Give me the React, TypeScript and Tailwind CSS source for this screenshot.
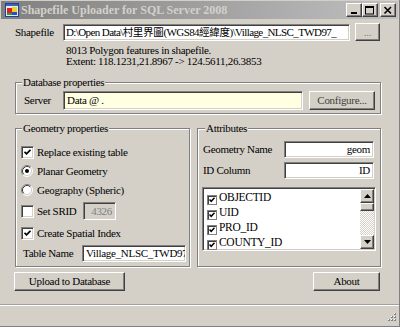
import React from "react";

const sunken =
  "border border-t-[#808080] border-l-[#808080] border-r-white border-b-white shadow-[inset_1px_1px_0_#404040,inset_-1px_-1px_0_#d4d0c8]";
const raised =
  "border border-t-white border-l-white border-r-[#404040] border-b-[#404040] shadow-[inset_-1px_-1px_0_#808080]";
const group =
  "relative border border-[#808080] shadow-[inset_1px_1px_0_#fff,1px_1px_0_#fff]";

function Check({ checked }: { checked?: boolean }) {
  return (
    <div className={`w-[13px] h-[13px] shrink-0 bg-white flex items-center justify-center ${sunken}`}>
      {checked && (
        <svg width="7" height="7" viewBox="0 0 7 7">
          <polyline points="0.5,2.8 2.5,4.8 6.5,0.8" fill="none" stroke="#000" strokeWidth="1.8" />
        </svg>
      )}
    </div>
  );
}

function Radio({ checked }: { checked?: boolean }) {
  return (
    <svg width="12" height="12" viewBox="0 0 12 12" className="shrink-0">
      <circle cx="6" cy="6" r="5" fill="#fff" />
      <path d="M2.11 9.89 A5.5 5.5 0 0 1 9.89 2.11" fill="none" stroke="#808080" strokeWidth="1" />
      <path d="M9.89 2.11 A5.5 5.5 0 0 1 2.11 9.89" fill="none" stroke="#fff" strokeWidth="1" />
      <path d="M2.82 9.18 A4.5 4.5 0 0 1 9.18 2.82" fill="none" stroke="#404040" strokeWidth="1" />
      <path d="M9.18 2.82 A4.5 4.5 0 0 1 2.82 9.18" fill="none" stroke="#d4d0c8" strokeWidth="1" />
      {checked && <circle cx="6" cy="6" r="2" fill="#000" />}
    </svg>
  );
}

function ListCheck() {
  return (
    <div className="w-[10px] h-[10px] shrink-0 bg-white border border-[#808080] shadow-[inset_1px_1px_0_#404040] flex items-center justify-center">
      <svg width="6" height="6" viewBox="0 0 6 6">
        <polyline points="0.5,2.5 2.2,4.3 5.5,0.8" fill="none" stroke="#000" strokeWidth="1.5" />
      </svg>
    </div>
  );
}

function Arrow({ up }: { up?: boolean }) {
  return (
    <div className={`w-[14px] h-[14px] bg-[#d4d0c8] flex items-center justify-center ${raised}`}>
      <svg width="7" height="4" viewBox="0 0 7 4">
        {up ? <polygon points="3.5,0 7,4 0,4" fill="#000" /> : <polygon points="0,0 7,0 3.5,4" fill="#000" />}
      </svg>
    </div>
  );
}

function CapBtn({ kind }: { kind: "min" | "max" | "close" }) {
  return (
    <div className={`w-[16px] h-[14px] bg-[#d4d0c8] flex items-center justify-center ${raised}`}>
      <svg width="10" height="9" viewBox="0 0 10 9">
        {kind === "min" && <rect x="2" y="6" width="6" height="2" fill="#000" />}
        {kind === "max" && (
          <>
            <rect x="0.5" y="0.5" width="8" height="7.5" fill="none" stroke="#000" strokeWidth="1" />
            <rect x="0.5" y="0.5" width="8" height="1.5" fill="#000" />
          </>
        )}
        {kind === "close" && (
          <path d="M1.5 1 L8 7.5 M8 1 L1.5 7.5" stroke="#000" strokeWidth="1.6" />
        )}
      </svg>
    </div>
  );
}

function AppIcon() {
  return (
    <svg width="14" height="14" viewBox="0 0 14 14" className="shrink-0">
      <rect x="0.5" y="0.5" width="13" height="13" fill="#e8e8f0" stroke="#2040a0" />
      <rect x="1" y="1" width="12" height="2" fill="#4060c0" />
      <rect x="2" y="5" width="5" height="5" fill="#e02020" />
      <rect x="7" y="4" width="5" height="5" fill="#f0d020" />
      <rect x="7" y="9" width="5" height="3" fill="#2050d0" />
      <rect x="2" y="10" width="5" height="2" fill="#20a040" />
    </svg>
  );
}

export default function App() {
  const items = ["OBJECTID", "UID", "PRO_ID", "COUNTY_ID"];
  return (
    <div className="w-[400px] h-[327px] bg-[#d4d0c8] flex flex-col border-r border-b border-r-[#808080] border-b-[#808080] font-['Liberation_Serif','Noto_Sans_CJK_TC',serif] text-[11px] tracking-[-0.3px] text-black overflow-hidden select-none">
      {/* Title bar */}
      <div className="mt-[1px] mx-[1px] h-[18px] flex items-center bg-gradient-to-r from-[#808080] to-[#c0c0c0] pl-[4px] pr-[2px]">
        <AppIcon />
        <span className="ml-[2px] text-[12px] font-bold tracking-[0px] text-[#d4d0c8] leading-none">
          Shapefile Uploader for SQL Server 2008
        </span>
        <div className="ml-auto flex items-center">
          <CapBtn kind="min" />
          <CapBtn kind="max" />
          <div className="w-[2px]" />
          <CapBtn kind="close" />
        </div>
      </div>

      {/* Shapefile row */}
      <div className="mt-[4px] h-[18px] flex items-center pl-[15px]">
        <span className="w-[48px]">Shapefile</span>
        <div className={`w-[287px] h-[17px] bg-white flex items-center pl-[2px] overflow-hidden whitespace-nowrap tracking-[-0.6px] ${sunken}`}>
          <span>
            D:\Open Data\<span className="text-[10.5px] tracking-[-0.3px]">村里界圖</span>(WGS84<span className="text-[10.5px] tracking-[-0.3px]">經緯度</span>)\Village_NLSC_TWD97_
          </span>
        </div>
        <div className={`ml-[5px] w-[25px] h-[18px] bg-[#d4d0c8] flex items-center justify-center text-[#808080] ${raised}`}>
          ...
        </div>
      </div>

      {/* Info */}
      <div className="mt-[4px] pl-[66px] leading-[11px]">
        <div>8013 Polygon features in shapefile.</div>
        <div>Extent: 118.1231,21.8967 -&gt; 124.5611,26.3853</div>
      </div>

      {/* Database properties */}
      <div className={`mt-[15px] ml-[15px] w-[366px] h-[32px] ${group}`}>
        <span className="absolute -top-[7px] left-[6px] px-[1px] bg-[#d4d0c8] leading-[12px]">Database properties</span>
        <div className="mt-[8px] flex items-center pl-[8px]">
          <span className="w-[39px]">Server</span>
          <div className={`w-[240px] h-[19px] bg-[#ffffe1] flex items-center pl-[3px] ${sunken}`}>Data @ .</div>
          <div className={`ml-[6px] w-[66px] h-[19px] bg-[#d4d0c8] flex items-center justify-center text-[#404040] ${raised}`}>
            Configure...
          </div>
        </div>
      </div>

      {/* Groups row */}
      <div className="mt-[14px] h-[139px] flex pl-[15px] gap-[7px]">
        {/* Geometry properties */}
        <div className={`w-[175px] h-[139px] ${group} flex flex-col pt-[13px] pl-[5px]`}>
          <span className="absolute -top-[7px] left-[6px] px-[1px] bg-[#d4d0c8] leading-[12px]">Geometry properties</span>
          <div className="h-[20px] flex items-center">
            <Check checked />
            <span className="ml-[3px]">Replace existing table</span>
          </div>
          <div className="h-[18px] flex items-center">
            <Radio checked />
            <span className="ml-[4px]">Planar Geometry</span>
          </div>
          <div className="h-[20px] flex items-center">
            <Radio />
            <span className="ml-[4px]">Geography (Spheric)</span>
          </div>
          <div className="h-[22px] flex items-center">
            <Check />
            <span className="ml-[3px] w-[46px]">Set SRID</span>
            <div className={`w-[33px] h-[18px] bg-[#d4d0c8] flex items-center justify-end pr-[3px] text-[#808080] ${sunken}`}>4326</div>
          </div>
          <div className="h-[22px] flex items-center">
            <Check checked />
            <span className="ml-[3px]">Create Spatial Index</span>
          </div>
          <div className="h-[18px] flex items-center pl-[2px]">
            <span className="w-[59px]">Table Name</span>
            <div className={`w-[104px] h-[17px] bg-white flex items-center pl-[3px] overflow-hidden whitespace-nowrap ${sunken}`}>
              Village_NLSC_TWD97
            </div>
          </div>
        </div>

        {/* Attributes */}
        <div className={`w-[184px] h-[139px] ${group} flex flex-col pt-[12px]`}>
          <span className="absolute -top-[7px] left-[7px] px-[1px] bg-[#d4d0c8] leading-[12px]">Attributes</span>
          <div className="h-[17px] flex items-center pl-[5px]">
            <span className="w-[81px]">Geometry Name</span>
            <div className={`w-[90px] h-[17px] bg-white flex items-center justify-end pr-[3px] ${sunken}`}>geom</div>
          </div>
          <div className="mt-[4px] h-[17px] flex items-center pl-[5px]">
            <span className="w-[81px]">ID Column</span>
            <div className={`w-[90px] h-[17px] bg-white flex items-center justify-end pr-[3px] ${sunken}`}>ID</div>
          </div>
          <div className={`mt-[8px] ml-[4px] w-[174px] h-[64px] bg-white flex ${sunken} p-[1px]`}>
            <div className="flex-1 flex flex-col pt-[1px]">
              {items.map((it) => (
                <div key={it} className="h-[15px] flex items-center pl-[3px]">
                  <div className="mt-[4px]">
                    <ListCheck />
                  </div>
                  <span className="ml-[2px] text-[11.5px]">{it}</span>
                </div>
              ))}
            </div>
            <div className="w-[14px] flex flex-col">
              <Arrow up />
              <div className={`h-[8px] bg-[#d4d0c8] ${raised}`} />
              <div className="flex-1 bg-[image:repeating-conic-gradient(#ffffff_0_25%,#d4d0c8_0_50%)] bg-[length:2px_2px]" />
              <Arrow />
            </div>
          </div>
        </div>
      </div>

      {/* Buttons */}
      <div className="mt-[5px] h-[19px] flex pl-[14px] pr-[19px]">
        <div className={`w-[111px] h-[19px] bg-[#d4d0c8] flex items-center justify-center ${raised}`}>Upload to Database</div>
        <div className={`ml-auto w-[67px] h-[19px] bg-[#d4d0c8] flex items-center justify-center ${raised}`}>About</div>
      </div>

      {/* Separator */}
      <div className="mt-[13px] h-[2px] border-t border-t-[#a0a0a0] border-b border-b-white" />

      {/* Status area */}
      <div className="flex-1 flex items-end justify-end pr-[2px] pb-[2px]">
        <svg width="12" height="12" viewBox="0 0 12 12">
          {[
            [9, 1],
            [6, 4],
            [9, 4],
            [3, 7],
            [6, 7],
            [9, 7],
          ].map(([x, y], i) => (
            <g key={i}>
              <rect x={x} y={y} width="2" height="2" fill="#808080" />
              <rect x={x} y={y} width="1" height="1" fill="#fff" />
            </g>
          ))}
        </svg>
      </div>
    </div>
  );
}
